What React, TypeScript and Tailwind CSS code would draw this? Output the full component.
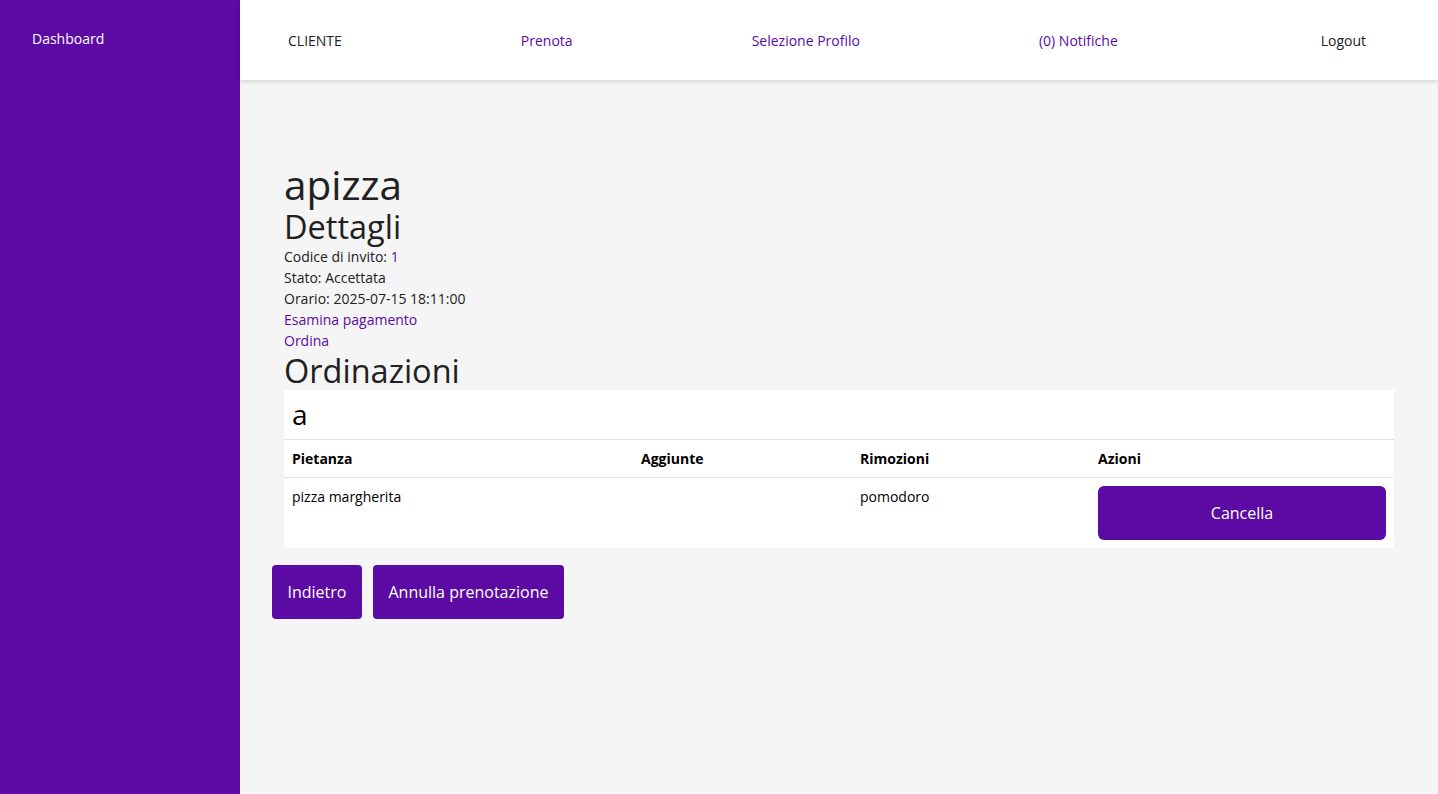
const purple = "bg-[#5c0aa4]";

const Nav = () => {
  return (
    <header className="h-20 bg-white shadow-[0_2px_4px_rgba(0,0,0,0.12)] flex items-center pt-0.5 pl-12 pr-[72px] text-sm">
      <div className="flex items-center gap-[179px]">
        <span className="text-[#222]">CLIENTE</span>
        <a className="text-[#5c0aa4]">Prenota</a>
        <a className="text-[#5c0aa4]">Selezione Profilo</a>
        <a className="text-[#5c0aa4]">(0) Notifiche</a>
      </div>
      <a className="ml-auto text-[#222]">Logout</a>
    </header>
  );
};

const App = () => {
  const rows = [{ pietanza: "pizza margherita", aggiunte: "", rimozioni: "pomodoro" }];

  return (
    <div className="flex min-h-[794px] font-['Open_Sans',sans-serif] text-[#212121]">
      <aside className={`w-[240px] shrink-0 ${purple} text-white text-sm px-8 pt-[29px]`}>
        <a>Dashboard</a>
      </aside>
      <main className="flex-1 bg-[#f5f5f5]">
        <Nav />
        <div className="pt-[81px] px-[44px]">
          <h1 className="text-[40.5px] leading-[47px]">apizza</h1>
          <h2 className="text-[32.5px] leading-[38px]">Dettagli</h2>
          <div className="text-sm leading-[21px]">
            <p>
              Codice di invito: <span className="text-[#5c0aa4]">1</span>
            </p>
            <p>Stato: Accettata</p>
            <p>Orario: 2025-07-15 18:11:00</p>
            <p className="text-[#5c0aa4]">Esamina pagamento</p>
            <p className="text-[#5c0aa4]">Ordina</p>
          </div>
          <h2 className="text-[32.5px] leading-[39px]">Ordinazioni</h2>
          <div className="bg-white text-black">
            <div className="px-2 py-2 text-[28px] leading-[33px] border-b border-[#dee2e6]">a</div>
            <table className="w-full text-sm border-collapse">
              <thead>
                <tr className="border-b border-[#dee2e6] text-left">
                  <th className="w-[349px] px-2 pt-[9px] pb-2 font-bold">Pietanza</th>
                  <th className="w-[219px] px-2 pt-[9px] pb-2 font-bold">Aggiunte</th>
                  <th className="w-[238px] px-2 pt-[9px] pb-2 font-bold">Rimozioni</th>
                  <th className="px-2 pt-[9px] pb-2 font-bold">Azioni</th>
                </tr>
              </thead>
              <tbody>
                {rows.map((r) => (
                  <tr key={r.pietanza} className="align-top">
                    <td className="p-2 pt-[9px]">{r.pietanza}</td>
                    <td className="p-2 pt-[9px]">{r.aggiunte}</td>
                    <td className="p-2 pt-[9px]">{r.rimozioni}</td>
                    <td className="p-2">
                      <button className={`w-full ${purple} text-white text-base leading-6 py-[15px] rounded-md`}>
                        Cancella
                      </button>
                    </td>
                  </tr>
                ))}
              </tbody>
            </table>
          </div>
          <div className="flex gap-[11px] mt-[17px] -ml-3">
            <button className={`${purple} text-white text-base leading-6 px-[15.5px] py-[15px] rounded-[4px]`}>Indietro</button>
            <button className={`${purple} text-white text-base leading-6 px-[15.5px] py-[15px] rounded-[4px]`}>
              Annulla prenotazione
            </button>
          </div>
        </div>
      </main>
    </div>
  );
};

export default App;
